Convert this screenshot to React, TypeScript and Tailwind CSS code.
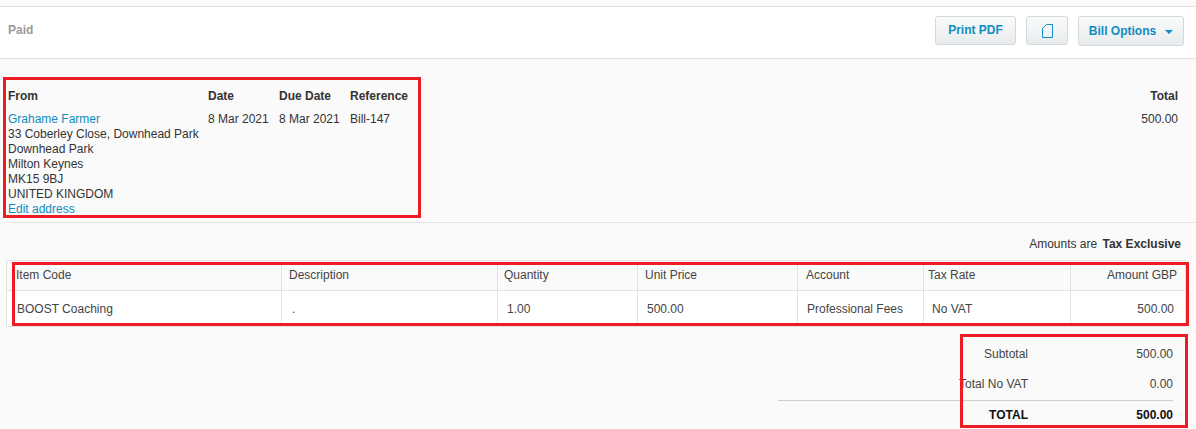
const font = { fontFamily: '"Liberation Sans", Arial, sans-serif' };

const COLUMNS = [
  { label: "Item Code", value: "BOOST Coaching", width: "w-[275px]", head: "pl-[9px]", cell: "pl-[10px]" },
  { label: "Description", value: ".", width: "w-[216px]", head: "pl-[7px]", cell: "pl-[10px]" },
  { label: "Quantity", value: "1.00", width: "w-[140px]", head: "pl-[6px]", cell: "pl-[9px]" },
  { label: "Unit Price", value: "500.00", width: "w-[160px]", head: "pl-[7px]", cell: "pl-[9px]" },
  { label: "Account", value: "Professional Fees", width: "w-[126px]", head: "pl-[8px]", cell: "pl-[9px]" },
  { label: "Tax Rate", value: "No VAT", width: "w-[147px]", head: "pl-[4px]", cell: "pl-[8px]" },
  { label: "Amount GBP", value: "500.00", width: "flex-1", head: "pr-[8px] text-right", cell: "pr-[11px] text-right" },
];

function Btn({ children, className }: { children: React.ReactNode; className: string }) {
  return (
    <button className={`flex items-center justify-center rounded-[3px] border border-[#d3d8dc] bg-gradient-to-b from-[#fafbfb] to-[#e8ebed] text-[12px] font-bold text-[#0f8cc0] ${className}`}>
      {children}
    </button>
  );
}

function RedBox({ className }: { className: string }) {
  return <div className={`pointer-events-none absolute border-[3px] border-[#ee1c25] ${className}`} />;
}

export default function App() {
  return (
    <div className="relative h-[429px] w-[1196px] overflow-hidden bg-[#fafafa] text-[12px] text-[#333]" style={font}>
      <div className="h-[6px]" />
      <header className="flex h-[53px] items-start justify-between border-y border-[#e2e2e2] bg-white pl-[8px] pr-[12px]">
        <span className="mt-[14px] text-[12px] font-bold text-[#9a9a9a]">Paid</span>
        <div className="mt-[9px] flex items-start">
          <Btn className="h-[29px] w-[81px] pb-[2px]">Print PDF</Btn>
          <Btn className="ml-[10px] h-[29px] w-[42px]">
            <svg width="11" height="14" viewBox="0 0 11 14" fill="none" stroke="#0f8cc0" strokeWidth="1">
              <path d="M4.5 .5H10.5V13.5H.5V4.5Z" />
            </svg>
          </Btn>
          <Btn className="ml-[10px] h-[30px] w-[106px] gap-[9px]">
            Bill Options
            <span className="mt-[2px] border-x-[4px] border-t-[4px] border-x-transparent border-t-[#0f8cc0]" />
          </Btn>
        </div>
      </header>

      <section className="flex justify-between pl-[8px] pr-[18px] pt-[30px]">
        <div className="flex">
          <div className="w-[200px]">
            <div className="h-[23px] font-bold leading-[14px]">From</div>
            <div className="leading-[15px]">
              <div className="text-[#0f8cc0]">Grahame Farmer</div>
              <div>33 Coberley Close, Downhead Park</div>
              <div>Downhead Park</div>
              <div>Milton Keynes</div>
              <div>MK15 9BJ</div>
              <div>UNITED KINGDOM</div>
              <div className="text-[#0f8cc0]">Edit address</div>
            </div>
          </div>
          <div className="w-[71px]">
            <div className="h-[23px] font-bold leading-[14px]">Date</div>
            <div className="leading-[15px]">8 Mar 2021</div>
          </div>
          <div className="w-[71px]">
            <div className="h-[23px] font-bold leading-[14px]">Due Date</div>
            <div className="leading-[15px]">8 Mar 2021</div>
          </div>
          <div>
            <div className="h-[23px] font-bold leading-[14px]">Reference</div>
            <div className="leading-[15px]">Bill-147</div>
          </div>
        </div>
        <div className="text-right">
          <div className="h-[23px] font-bold leading-[14px]">Total</div>
          <div className="leading-[15px]">500.00</div>
        </div>
      </section>

      <div className="ml-[11px] mt-[5px] border-t border-[#e2e2e2]" />

      <div className="mt-[14px] pr-[15px] text-right leading-[14px]">
        Amounts are <span className="ml-[2px] font-bold">Tax Exclusive</span>
      </div>

      <div className="ml-[6px] mt-[9px] flex w-[1180px] border border-[#e2e2e2] text-[#444]">
        {COLUMNS.map((c, i) => (
          <div key={c.label} className={`${c.width} ${i < COLUMNS.length - 1 ? "border-r border-[#e2e2e2]" : ""}`}>
            <div className={`flex h-[30px] items-center border-b border-[#e2e2e2] bg-[#fafafa] pb-[2px] ${c.head}`}>
              <span className="w-full">{c.label}</span>
            </div>
            <div className={`flex h-[35px] items-center bg-white ${c.cell}`}>
              <span className="w-full">{c.value}</span>
            </div>
          </div>
        ))}
      </div>

      <div className="ml-[778px] mt-[12px] w-[395px] text-[#444]">
        <div className="flex h-[30px] items-center justify-end">
          <span>Subtotal</span>
          <span className="w-[145px] text-right">500.00</span>
        </div>
        <div className="flex h-[31px] items-center justify-end pb-[2px]">
          <span>Total No VAT</span>
          <span className="w-[145px] text-right">0.00</span>
        </div>
        <div className="flex h-[29px] items-center justify-end border-t border-[#cfcfcf] font-bold text-[#111]">
          <span>TOTAL</span>
          <span className="w-[145px] text-right">500.00</span>
        </div>
      </div>

      <RedBox className="left-[3px] top-[77px] h-[141px] w-[418px]" />
      <RedBox className="left-[12px] top-[262px] h-[64px] w-[1177px]" />
      <RedBox className="left-[960px] top-[334px] h-[94px] w-[228px]" />
    </div>
  );
}
